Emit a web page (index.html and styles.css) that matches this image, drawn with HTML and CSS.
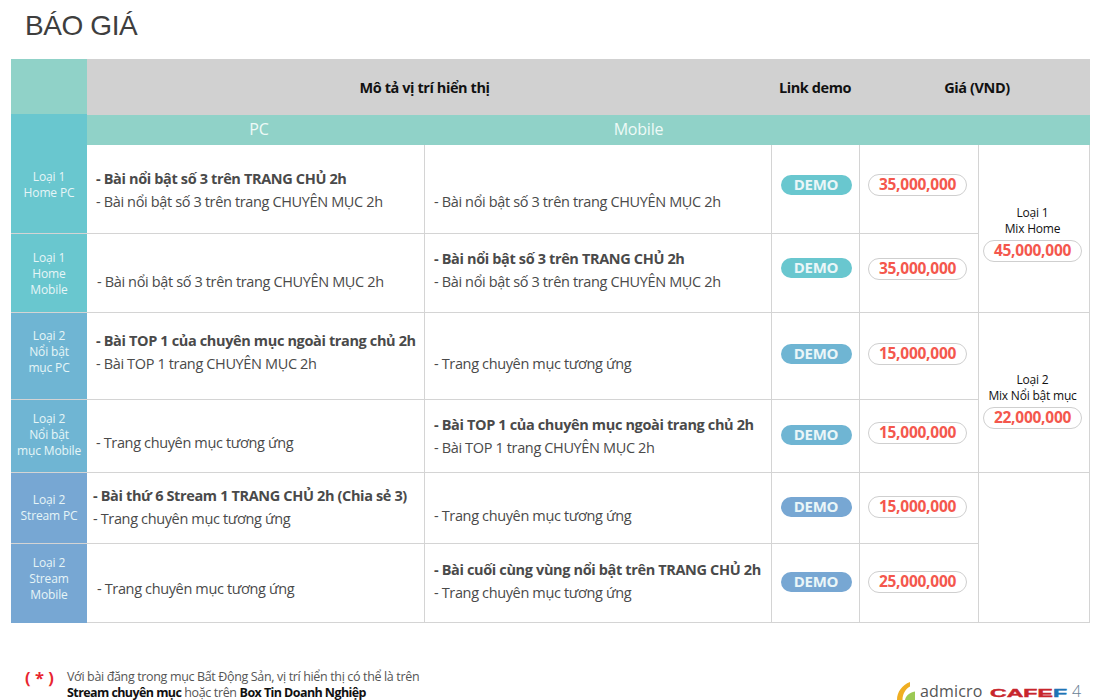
FILE: index.html
```html
<!DOCTYPE html>
<html lang="vi">
<head>
<meta charset="utf-8">
<title>Báo giá</title>
<link rel="stylesheet" href="styles.css">
</head>
<body>
<h1 class="title">BÁO GIÁ</h1>
<main class="sheet">
  <div class="corner"></div>
  <div class="head head-desc">Mô tả vị trí hiển thị</div>
  <div class="head head-link">Link demo</div>
  <div class="head head-price">Giá (VND)</div>
  <div class="sub sub-pc">PC</div>
  <div class="sub sub-mobile">Mobile</div>
  <div class="sub sub-rest"></div>

  <div class="side side-first c1">Loại 1<br>Home PC</div>
  <div class="cell text t23"><b>- Bài nổi bật số 3 trên TRANG CHỦ 2h</b><span>- Bài nổi bật số 3 trên trang CHUYÊN MỤC 2h</span></div>
  <div class="cell text t45"><span>- Bài nổi bật số 3 trên trang CHUYÊN MỤC 2h</span></div>
  <div class="cell pill-cell p30"><a class="demo c1">DEMO</a></div>
  <div class="cell pill-cell p29"><span class="price">35,000,000</span></div>
  <div class="cell mix m1">Loại 1<br>Mix Home<span class="price">45,000,000</span></div>

  <div class="side s2 c1">Loại 1<br>Home<br>Mobile</div>
  <div class="cell text t36 ind1"><span>- Bài nổi bật số 3 trên trang CHUYÊN MỤC 2h</span></div>
  <div class="cell text t13"><b>- Bài nổi bật số 3 trên TRANG CHỦ 2h</b><span>- Bài nổi bật số 3 trên trang CHUYÊN MỤC 2h</span></div>
  <div class="cell pill-cell p24"><a class="demo c1">DEMO</a></div>
  <div class="cell pill-cell p24"><span class="price">35,000,000</span></div>

  <div class="side s3 c2">Loại 2<br>Nổi bật<br>mục PC</div>
  <div class="cell text t16"><b>- Bài TOP 1 của chuyên mục ngoài trang chủ 2h</b><span>- Bài TOP 1 trang CHUYÊN MỤC 2h</span></div>
  <div class="cell text t39"><span>- Trang chuyên mục tương ứng</span></div>
  <div class="cell pill-cell p31"><a class="demo c2">DEMO</a></div>
  <div class="cell pill-cell p30"><span class="price">15,000,000</span></div>
  <div class="cell mix m2">Loại 2<br>Mix Nổi bật mục<span class="price">22,000,000</span></div>

  <div class="side s4 c2">Loại 2<br>Nổi bật<br>mục Mobile</div>
  <div class="cell text t31"><span>- Trang chuyên mục tương ứng</span></div>
  <div class="cell text t13"><b>- Bài TOP 1 của chuyên mục ngoài trang chủ 2h</b><span>- Bài TOP 1 trang CHUYÊN MỤC 2h</span></div>
  <div class="cell pill-cell p25"><a class="demo c2">DEMO</a></div>
  <div class="cell pill-cell p22"><span class="price">15,000,000</span></div>

  <div class="side s5 c3">Loại 2<br>Stream PC</div>
  <div class="cell text t11 out"><b>- Bài thứ 6 Stream 1 TRANG CHỦ 2h (Chia sẻ 3)</b><span>- Trang chuyên mục tương ứng</span></div>
  <div class="cell text t31"><span>- Trang chuyên mục tương ứng</span></div>
  <div class="cell pill-cell p24"><a class="demo c3">DEMO</a></div>
  <div class="cell pill-cell p23"><span class="price">15,000,000</span></div>
  <div class="cell mix m3"></div>

  <div class="side s6 c3">Loại 2<br>Stream<br>Mobile</div>
  <div class="cell text t33 ind1"><span>- Trang chuyên mục tương ứng</span></div>
  <div class="cell text t14"><b>- Bài cuối cùng vùng nổi bật trên TRANG CHỦ 2h</b><span>- Trang chuyên mục tương ứng</span></div>
  <div class="cell pill-cell p28"><a class="demo c3">DEMO</a></div>
  <div class="cell pill-cell p27"><span class="price">25,000,000</span></div>
</main>
<footer class="foot">
  <div class="mark">( * )</div>
  <p class="note">Với bài đăng trong mục Bất Động Sản, vị trí hiển thị có thể là trên<br><b>Stream chuyên mục</b> hoặc trên <b>Box Tin Doanh Nghiệp</b></p>
  <div class="brand">
    <svg class="brand-icon" width="20" height="19" viewBox="0 0 20 19" aria-hidden="true">
      <path d="M1 19C1 11 6 4 14 1L14 5.500C9.500 8 6.500 13 6.500 19Z" fill="#efae22"/>
      <path d="M9 19C9.500 15.500 13 11.500 19 10.500L19 19Z" fill="#9cc954"/>
    </svg>
    <span class="admicro">admicro</span>
    <span class="cafef">CAFE<i>F</i></span>
    <span class="pageno">4</span>
  </div>
</footer>
</body>
</html>
```
FILE: styles.css
```css
* { box-sizing: border-box; }
html, body { margin: 0; height: 700px; overflow: hidden; background: #fff; }
body { font-family: "Open Sans", "Noto Sans", sans-serif; color: #4a4a4a; }

.title {
  margin: 0;
  padding: 9px 0 0 25px;
  height: 59px;
  font: 400 28px/34px "Liberation Sans", Arial, sans-serif;
  letter-spacing: -.4px;
  color: #3e3e3e;
}

.sheet {
  margin-left: 11px;
  width: 1079px;
  display: grid;
  grid-template-columns: 76px 338px 347px 88px 119px 111px;
  grid-template-rows: 55px 1px 30px 89px 79px 87px 73px 71px 79px;
}

.corner { grid-area: 1 / 1; background: #90d2c8; }
.head {
  grid-row: 1 / span 2;
  background: #d1d1d1;
  display: flex;
  align-items: center;
  justify-content: center;
  font-size: 14.500px;
  font-weight: 700;
  letter-spacing: -.42px;
  color: #111;
}
.head-desc { grid-column: 2 / span 2; padding-right: 10px; }
.head-link { grid-column: 4; padding-right: 2px; }
.head-price { grid-column: 5 / span 2; padding-left: 4px; }

.sub {
  grid-row: 3;
  background: #90d2c8;
  color: #eefaf7;
  font-size: 16px;
  line-height: 28px;
  text-align: center;
  letter-spacing: -.2px;
}
.sub-pc { grid-column: 2; padding-left: 6px; }
.sub-mobile { grid-column: 3; padding-left: 80px; }
.sub-rest { grid-column: 4 / span 3; }

.side {
  grid-column: 1;
  color: #e6f5f7;
  font-size: 12px;
  line-height: 16px;
  letter-spacing: -.15px;
  text-align: center;
  display: flex;
  align-items: center;
  justify-content: center;
  border-bottom: 1px solid #d4d4d4;
}
.side-first { grid-row: 2 / span 3; padding-top: 23px; }
.s2 { grid-row: 5; padding-top: 2px; }
.s3 { grid-row: 6; padding-bottom: 8px; }
.s4 { grid-row: 7; padding-bottom: 2px; }
.s5 { grid-row: 8; padding-bottom: 1px; }
.s6 { grid-row: 9; padding-bottom: 10px; border-bottom: 0; }
.c1 { background: #69c7cf; }
.c2 { background: #6fb5d3; }
.c3 { background: #77a7d3; }

.cell {
  border-right: 1px solid #d4d4d4;
  border-bottom: 1px solid #d4d4d4;
  min-width: 0;
}
.text {
  display: flex;
  flex-direction: column;
  padding-left: 9px;
  font-size: 14.500px;
  line-height: 23px;
  letter-spacing: -.36px;
  white-space: nowrap;
}
.text b { font-weight: 700; }
.ind1 { padding-left: 10px; }
.out { padding-left: 6px; }
.t11 { padding-top: 11px; }
.t13 { padding-top: 13px; }
.t14 { padding-top: 14px; }
.t16 { padding-top: 16px; }
.t23 { padding-top: 22px; }
.t31 { padding-top: 31px; }
.t33 { padding-top: 33px; }
.t36 { padding-top: 36px; }
.t39 { padding-top: 39px; }
.t45 { padding-top: 45px; }

.pill-cell { display: flex; justify-content: center; align-items: flex-start; }
.p22 { padding-top: 22px; }
.p23 { padding-top: 23px; }
.p24 { padding-top: 24px; }
.p25 { padding-top: 25px; }
.p27 { padding-top: 27px; }
.p28 { padding-top: 28px; }
.p29 { padding-top: 29px; }
.p30 { padding-top: 30px; }
.p31 { padding-top: 31px; }

.demo {
  width: 71px;
  height: 20px;
  margin-left: 1px;
  border-radius: 10px;
  color: #eaf6f8;
  font-size: 15px;
  font-weight: 700;
  line-height: 18px;
  letter-spacing: -.3px;
  text-align: center;
}
.price {
  display: block;
  width: 99px;
  height: 22px;
  margin-right: 3px;
  border: 1px solid #cfcfcf;
  border-radius: 11px;
  background: #fff;
  color: #f4574d;
  font-size: 15.500px;
  font-weight: 700;
  line-height: 19px;
  letter-spacing: -.25px;
  text-align: center;
}
.mix {
  grid-column: 6;
  padding: 60px 3px 0 0;
  color: #111;
  font-size: 12px;
  line-height: 16px;
  letter-spacing: -.2px;
  text-align: center;
}
.mix .price { margin: 3px auto 0; }
.m1 { grid-row: 4 / span 2; }
.m2 { grid-row: 6 / span 2; padding-top: 59px; }
.m3 { grid-row: 8 / span 2; }

.foot {
  display: flex;
  align-items: flex-start;
  margin-top: 46px;
  padding-left: 25px;
  width: 1098px;
  height: 31px;
}
.mark {
  width: 42px;
  color: #e8252f;
  font-size: 16.500px;
  font-weight: 700;
  line-height: 18px;
  white-space: nowrap;
}
.note {
  margin: 0;
  flex: 1;
  font-size: 12.500px;
  line-height: 16px;
  letter-spacing: -.35px;
  color: #555;
}
.note b { color: #111; letter-spacing: -.58px; }
.brand {
  display: flex;
  align-items: flex-end;
  width: 202px;
  height: 31px;
  color: #555;
}
.brand-icon { flex: none; }
.admicro {
  margin-left: 4px;
  width: 64px;
  font: 500 16px/18px "Open Sans", sans-serif;
  color: #555;
  letter-spacing: .15px;
}
.cafef {
  margin: 0 42px 2px 6px;
  width: 36px;
  font: 700 11px/9px "Liberation Sans", sans-serif;
  color: #c8252c;
  -webkit-text-stroke: .4px currentColor;
  transform: scaleX(2.1);
  transform-origin: 0 100%;
}
.cafef i { font-style: normal; color: #1f74b5; }
.pageno { margin-left: 4px; font-size: 16px; font-weight: 300; line-height: 18px; color: #6a7f95; }
```
